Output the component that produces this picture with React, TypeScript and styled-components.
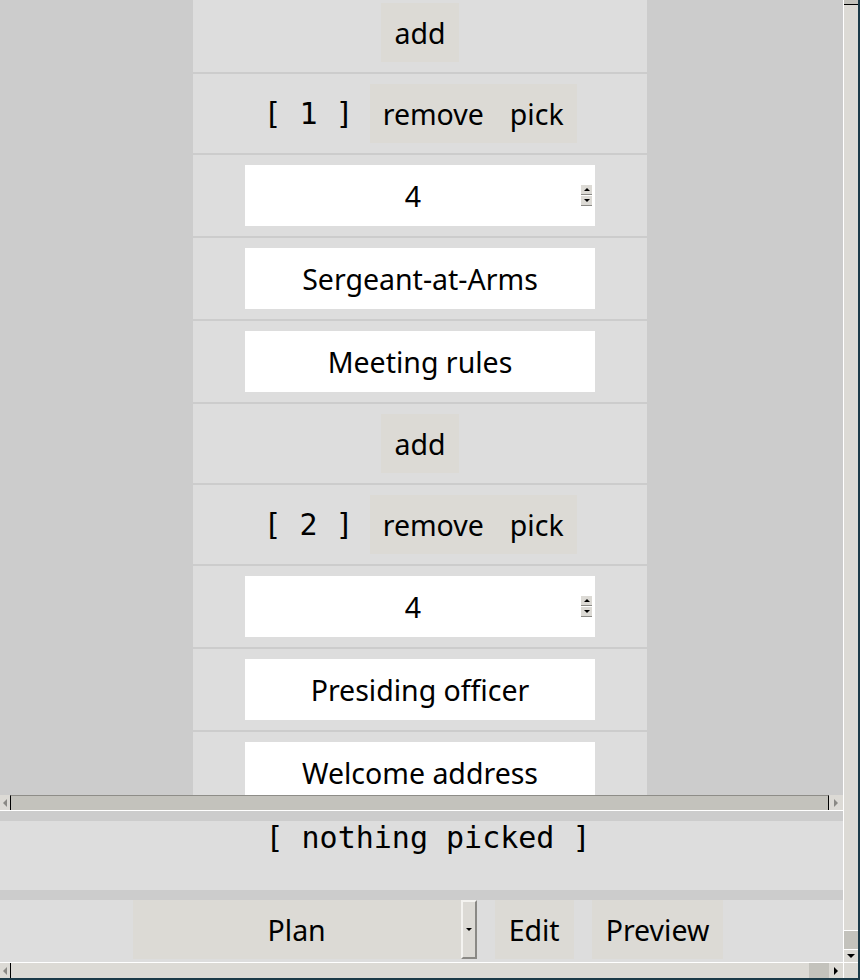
import React from "react";
import styled, { createGlobalStyle, css } from "styled-components";

const SANS = `"Noto Sans", "Open Sans", sans-serif`;
const MONO = `"DejaVu Sans Mono", "Liberation Mono", monospace`;

const Global = createGlobalStyle`
  html, body { margin: 0; padding: 0; }
  body { width: 860px; height: 980px; overflow: hidden; background: #cccccc; }
`;

const Window = styled.div`
  width: 860px;
  height: 980px;
  box-sizing: border-box;
  border-right: 2px solid #1b3a48;
  border-bottom: 2px solid #1b3a48;
  display: grid;
  grid-template-columns: 843px 15px;
  grid-template-rows: 962px 16px;
  background: #cccccc;
  overflow: hidden;
`;

const Main = styled.div`
  display: flex;
  flex-direction: column;
  min-height: 0;
`;

const Canvas = styled.div`
  height: 795px;
  overflow: hidden;
  display: flex;
  justify-content: center;
  padding-right: 3px;
  background: #cccccc;
`;

const Column = styled.div`
  width: 454px;
  margin-top: -7px;
  display: flex;
  flex-direction: column;
  gap: 2px;
  background: #cccccc;
`;

const Row = styled.div`
  flex: none;
  background: #dddddd;
  padding: 10px 0;
  display: flex;
  justify-content: center;
  align-items: center;
`;

const Button = styled.div`
  height: 59px;
  padding: 0 13px;
  background: #dcdad5;
  display: flex;
  align-items: center;
  justify-content: center;
  font: 28.5px ${SANS};
  color: #000;
`;

const IndexLabel = styled.div`
  font: 30px ${MONO};
  white-space: pre;
  color: #000;
  margin-right: 16px;
`;

const Field = styled.div`
  width: 350px;
  height: 61px;
  background: #ffffff;
  display: flex;
  align-items: center;
  font: 28.5px ${SANS};
  color: #000;
`;

const FieldText = styled.div`
  flex: 1;
  text-align: center;
`;

const SpinArrows = styled.div`
  width: 11px;
  margin-right: 3px;
  display: flex;
  flex-direction: column;
  gap: 1px;
`;

const SpinBtn = styled.div`
  height: 9px;
  background: #dcdad5;
  border-bottom: 1px solid #8a8985;
  display: flex;
  align-items: center;
  justify-content: center;
`;

const Tri = styled.span<{ $dir: "up" | "down" | "left" | "right"; $size?: number; $color?: string }>`
  width: 0;
  height: 0;
  display: block;
  ${({ $dir, $size = 3, $color = "#000" }) => {
    switch ($dir) {
      case "up":
        return css`border-left: ${$size}px solid transparent; border-right: ${$size}px solid transparent; border-bottom: ${$size}px solid ${$color};`;
      case "down":
        return css`border-left: ${$size}px solid transparent; border-right: ${$size}px solid transparent; border-top: ${$size}px solid ${$color};`;
      case "left":
        return css`border-top: ${$size}px solid transparent; border-bottom: ${$size}px solid transparent; border-right: ${$size}px solid ${$color};`;
      default:
        return css`border-top: ${$size}px solid transparent; border-bottom: ${$size}px solid transparent; border-left: ${$size}px solid ${$color};`;
    }
  }}
`;

/* inner horizontal scrollbar */
const InnerHScroll = styled.div`
  height: 16px;
  box-sizing: border-box;
  display: flex;
  background: #c3c2bc;
  border-bottom: 1px solid #ffffff;
`;

const ArrowBox = styled.div<{ $w: number }>`
  width: ${({ $w }) => $w}px;
  flex: none;
  background: #dcdad5;
  display: flex;
  align-items: center;
  justify-content: center;
`;

const TroughFill = styled.div`
  flex: 1;
  border-top: 1px solid #8e8d88;
  border-left: 1px solid #000;
  border-right: 1px solid #000;
`;

const Band = styled.div`
  height: 10px;
  flex: none;
  background: #cccccc;
`;

const Status = styled.div`
  height: 69px;
  flex: none;
  background: #dddddd;
  padding-left: 13px;
  display: flex;
  justify-content: center;
  align-items: flex-start;
  font: 30px ${MONO};
  line-height: 34px;
  white-space: pre;
  color: #000;
`;

const Toolbar = styled.div`
  height: 62px;
  flex: none;
  background: #dddddd;
  padding-left: 13px;
  display: flex;
  justify-content: center;
  align-items: flex-start;
  gap: 18px;
`;

const Menu = styled.div`
  display: flex;
  height: 59px;
  background: #dcdad5;
`;

const MenuLabel = styled.div`
  width: 328px;
  display: flex;
  align-items: center;
  justify-content: center;
  font: 28.5px ${SANS};
  color: #000;
`;

const MenuIndicator = styled.div`
  width: 16px;
  box-sizing: border-box;
  border-left: 2px solid #f4f3f0;
  border-top: 2px solid #f4f3f0;
  border-right: 2px solid #8a8985;
  border-bottom: 2px solid #8a8985;
  display: flex;
  align-items: center;
  justify-content: center;
`;

const ToolButton = styled(Button)`
  padding: 0 14px;
`;

/* outer scrollbars */
const VScroll = styled.div`
  display: flex;
  flex-direction: column;
  border-left: 1px solid #ffffff;
  background: #dcdad5;
`;

const VTopCap = styled.div`
  height: 4px;
  flex: none;
  background: #c3c2bc;
  border-bottom: 1px solid #000;
`;

const VThumb = styled.div`
  flex: 1;
  background: #dcdad5;
  border-bottom: 1px solid #ffffff;
`;

const VTrough = styled.div`
  height: 18px;
  flex: none;
  background: #c3c2bc;
`;

const VArrow = styled.div`
  height: 12px;
  flex: none;
  background: #dcdad5;
  border-top: 1px solid #ffffff;
  display: flex;
  align-items: center;
  justify-content: center;
`;

const HScroll = styled.div`
  display: flex;
  border-top: 1px solid #ffffff;
  background: #dcdad5;
`;

const HThumb = styled.div`
  flex: 1;
  border-left: 1px solid #000;
  background: #dcdad5;
`;

const HTrough = styled.div`
  width: 20px;
  flex: none;
  background: #c3c2bc;
`;

const Corner = styled.div`
  background: #dcdad5;
  border-left: 1px solid #ffffff;
  border-top: 1px solid #ffffff;
`;

type Item = { n: number; seats: string; role: string; topic: string };

const items: Item[] = [
  { n: 1, seats: "4", role: "Sergeant-at-Arms", topic: "Meeting rules" },
  { n: 2, seats: "4", role: "Presiding officer", topic: "Welcome address" },
];

const Spin: React.FC<{ value: string }> = ({ value }) => (
  <Field>
    <FieldText>{value}</FieldText>
    <SpinArrows>
      <SpinBtn>
        <Tri $dir="up" $size={3} />
      </SpinBtn>
      <SpinBtn>
        <Tri $dir="down" $size={3} />
      </SpinBtn>
    </SpinArrows>
  </Field>
);

export default function App() {
  return (
    <>
      <Global />
      <Window>
        <Main>
          <Canvas>
            <Column>
              {items.map((it) => (
                <React.Fragment key={it.n}>
                  <Row>
                    <Button>add</Button>
                  </Row>
                  <Row>
                    <IndexLabel>{`[ ${it.n} ]`}</IndexLabel>
                    <Button>remove</Button>
                    <Button>pick</Button>
                  </Row>
                  <Row>
                    <Spin value={it.seats} />
                  </Row>
                  <Row>
                    <Field>
                      <FieldText>{it.role}</FieldText>
                    </Field>
                  </Row>
                  <Row>
                    <Field>
                      <FieldText>{it.topic}</FieldText>
                    </Field>
                  </Row>
                </React.Fragment>
              ))}
            </Column>
          </Canvas>
          <InnerHScroll>
            <ArrowBox $w={10}>
              <Tri $dir="left" $size={4} $color="#8a8985" />
            </ArrowBox>
            <TroughFill />
            <ArrowBox $w={14}>
              <Tri $dir="right" $size={4} $color="#8a8985" />
            </ArrowBox>
          </InnerHScroll>
          <Band />
          <Status>[ nothing picked ]</Status>
          <Band />
          <Toolbar>
            <Menu>
              <MenuLabel>Plan</MenuLabel>
              <MenuIndicator>
                <Tri $dir="down" $size={3} />
              </MenuIndicator>
            </Menu>
            <ToolButton>Edit</ToolButton>
            <ToolButton>Preview</ToolButton>
          </Toolbar>
        </Main>
        <VScroll>
          <VTopCap />
          <VThumb />
          <VTrough />
          <VArrow>
            <Tri $dir="down" $size={4} />
          </VArrow>
        </VScroll>
        <HScroll>
          <ArrowBox $w={10}>
            <Tri $dir="left" $size={4} $color="#8a8985" />
          </ArrowBox>
          <HThumb />
          <HTrough />
          <ArrowBox $w={14}>
            <Tri $dir="right" $size={4} />
          </ArrowBox>
        </HScroll>
        <Corner />
      </Window>
    </>
  );
}
